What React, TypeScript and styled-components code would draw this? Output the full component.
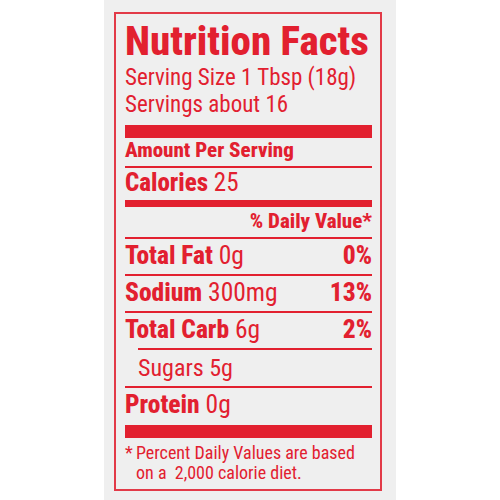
import React from "react";
import styled, { createGlobalStyle } from "styled-components";

const RED = "#e2202f";
const FONT = `"Roboto Condensed", "Roboto", "Liberation Sans", sans-serif`;

const GlobalStyle = createGlobalStyle`
  html, body { margin: 0; padding: 0; background: #ffffff; }
  body { font-family: ${FONT}; }
`;

const Page = styled.div`
  display: flex;
  justify-content: center;
  height: 500px;
  background: #ffffff;
`;

const Panel = styled.div`
  width: 292px;
  box-sizing: border-box;
  background: #efefef;
  padding: 12px 14px 0 10px;
`;

const Label = styled.section`
  border: 2px solid #e23a48;
  padding: 4px 8px 6px 9px;
  display: flex;
  flex-direction: column;
  color: ${RED};
  font-family: ${FONT};
  font-stretch: condensed;
`;

const Title = styled.h1`
  margin: 0;
  font-size: 41px;
  line-height: 46px;
  font-weight: 800;
  white-space: nowrap;
`;

const Text = styled.div`
  font-size: 23px;
  line-height: 27px;
  font-weight: 400;
  white-space: nowrap;
`;

const Rule = styled.div<{ $h: number; $mt?: number; $indent?: number }>`
  height: ${(p) => p.$h}px;
  margin-top: ${(p) => p.$mt ?? 0}px;
  margin-left: ${(p) => p.$indent ?? 0}px;
  background: ${RED};
`;

const Row = styled.div<{ $size: number; $lh: number; $pb?: number; $indent?: number; $right?: boolean }>`
  display: flex;
  justify-content: ${(p) => (p.$right ? "flex-end" : "space-between")};
  align-items: baseline;
  font-size: ${(p) => p.$size}px;
  line-height: ${(p) => p.$lh}px;
  padding-bottom: ${(p) => p.$pb ?? 0}px;
  padding-left: ${(p) => p.$indent ?? 0}px;
  white-space: nowrap;
`;

const B = styled.span`
  font-weight: 800;
`;

const Reg = styled.span`
  font-weight: 400;
`;

const Footnote = styled.div`
  display: flex;
  margin-top: 5px;
  font-size: 18px;
  line-height: 20px;
  font-weight: 400;
`;

const Star = styled.span`
  width: 11px;
  flex: none;
`;

const FootText = styled.span`
  white-space: pre;
`;

const nutrients = [
  { name: "Total Fat", amount: "0g", pct: "0%" },
  { name: "Sodium", amount: "300mg", pct: "13%" },
  { name: "Total Carb", amount: "6g", pct: "2%" },
];

export default function App() {
  return (
    <>
      <GlobalStyle />
      <Page>
        <Panel>
          <Label>
            <Title>Nutrition Facts</Title>
            <Text>Serving Size 1 Tbsp (18g)</Text>
            <Text>Servings about 16</Text>
            <Rule $h={13} $mt={7} />
            <Row $size={21} $lh={25}>
              <B>Amount Per Serving</B>
            </Row>
            <Rule $h={2} $mt={3} />
            <Row $size={25} $lh={30}>
              <span>
                <B>Calories</B> <Reg>25</Reg>
              </span>
            </Row>
            <Rule $h={7} $mt={2} />
            <Row $size={21} $lh={28} $right>
              <B>% Daily Value*</B>
            </Row>
            <Rule $h={2} $mt={2} />
            {nutrients.map((n) => (
              <React.Fragment key={n.name}>
                <Row $size={25.5} $lh={33} $pb={2}>
                  <span>
                    <B>{n.name}</B> <Reg>{n.amount}</Reg>
                  </span>
                  <B>{n.pct}</B>
                </Row>
                <Rule $h={2} $indent={n.name === "Total Carb" ? 13 : 0} />
              </React.Fragment>
            ))}
            <Row $size={24} $lh={36} $indent={13}>
              <Reg>Sugars 5g</Reg>
            </Row>
            <Rule $h={2} />
            <Row $size={25.5} $lh={33}>
              <span>
                <B>Protein</B> <Reg>0g</Reg>
              </span>
            </Row>
            <Rule $h={13} $mt={4} />
            <Footnote>
              <Star>*</Star>
              <FootText>{"Percent Daily Values are based\non a  2,000 calorie diet."}</FootText>
            </Footnote>
          </Label>
        </Panel>
      </Page>
    </>
  );
}
